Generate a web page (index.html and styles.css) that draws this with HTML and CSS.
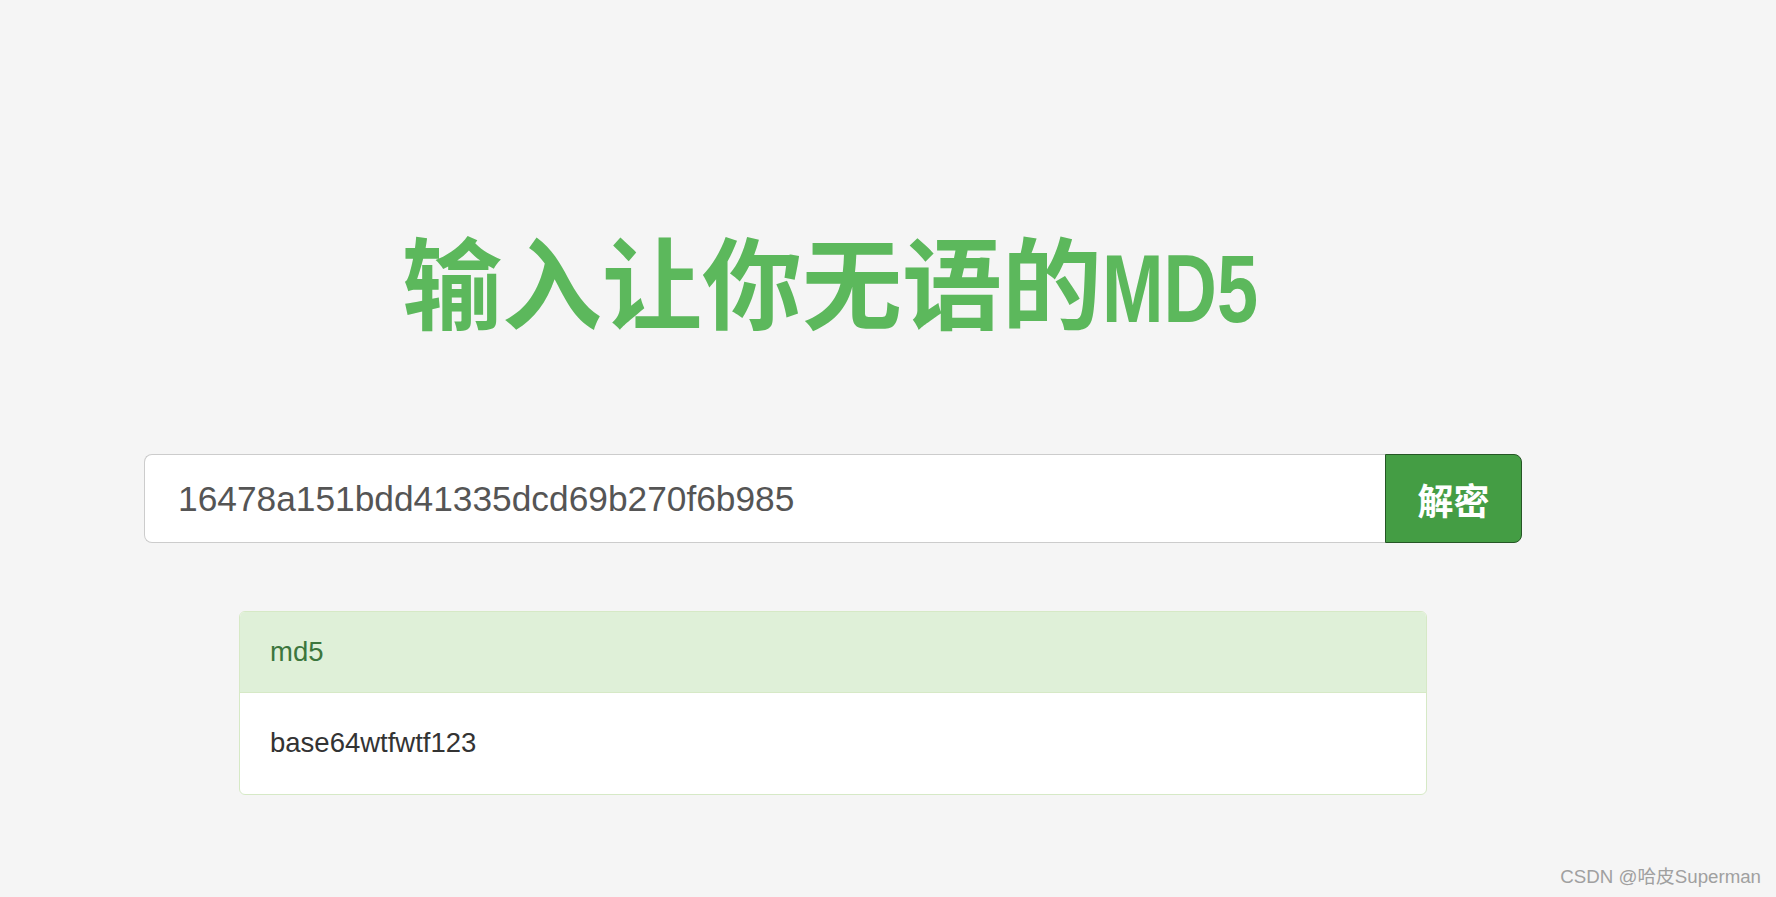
FILE: index.html
```html
<!DOCTYPE html>
<html lang="zh-CN">
<head>
    <meta charset="UTF-8">
    <meta name="viewport" content="width=device-width, initial-scale=1.0">
    <title>输入让你无语的MD5</title>
    <link rel="stylesheet" href="styles.css">
</head>
<body>
    <div class="page">
        <h1 class="title">输入让你无语的<span class="title-latin"><span>MD5</span></span></h1>

        <form class="search" id="decodeForm">
            <input type="text" class="search-input" id="hashInput" value="16478a151bdd41335dcd69b270f6b985">
            <button type="submit" class="search-button">解密</button>
        </form>

        <div class="result">
            <div class="result-head">md5</div>
            <div class="result-body">base64wtfwtf123</div>
        </div>
    </div>

    <div class="watermark">CSDN @哈皮Superman</div>
</body>
</html>
```

FILE: styles.css
```css
body {
    margin: 0;
    background-color: #f5f5f5;
    font-family: "Liberation Sans", Arial, "Noto Sans CJK SC", sans-serif;
    color: #333;
}
.page {
    width: 1666px;
    padding-top: 224px;
    display: flex;
    flex-direction: column;
    align-items: center;
}
.title {
    margin: 0;
    height: 110px;
    line-height: 110px;
    font-family: "Noto Sans CJK SC", sans-serif;
    font-size: 100px;
    font-weight: 700;
    color: #5cb85c;
    white-space: nowrap;
}
.title-latin {
    display: inline-block;
    width: 162px;
    vertical-align: top;
}
.title-latin span {
    display: inline-block;
    font-family: "Liberation Sans", Arial, sans-serif;
    font-size: 96px;
    transform: scaleX(0.77);
    transform-origin: left center;
}
.search {
    display: flex;
    width: 1378px;
    height: 89px;
    margin-top: 120px;
}
.search-input {
    flex: 1;
    box-sizing: border-box;
    height: 89px;
    padding: 0 20px 0 33px;
    border: 1px solid #ccc;
    border-right: none;
    border-radius: 8px 0 0 8px;
    background-color: #fff;
    font-family: "Liberation Sans", Arial, sans-serif;
    font-size: 35.3px;
    color: #555;
    outline: none;
}
.search-button {
    width: 137px;
    height: 89px;
    box-sizing: border-box;
    border: 1px solid #255625;
    border-radius: 0 8px 8px 0;
    background-color: #449d44;
    color: #fff;
    font-family: "Noto Sans CJK SC", sans-serif;
    font-size: 36px;
    font-weight: 700;
    cursor: pointer;
}
.result {
    width: 1186px;
    margin-top: 68px;
    border: 1px solid #d6e9c6;
    border-radius: 6px;
    background-color: #fff;
    overflow: hidden;
    font-size: 27.5px;
    line-height: 38px;
}
.result-head {
    padding: 21px 30px 21px;
    background-color: #dff0d8;
    border-bottom: 1px solid #d6e9c6;
    color: #3c763d;
}
.result-body {
    padding: 31px 30px 32px;
    color: #333;
}
.watermark {
    position: absolute;
    right: 15px;
    top: 865px;
    font-size: 18.7px;
    line-height: 24px;
    color: #a0a0a0;
}
```
